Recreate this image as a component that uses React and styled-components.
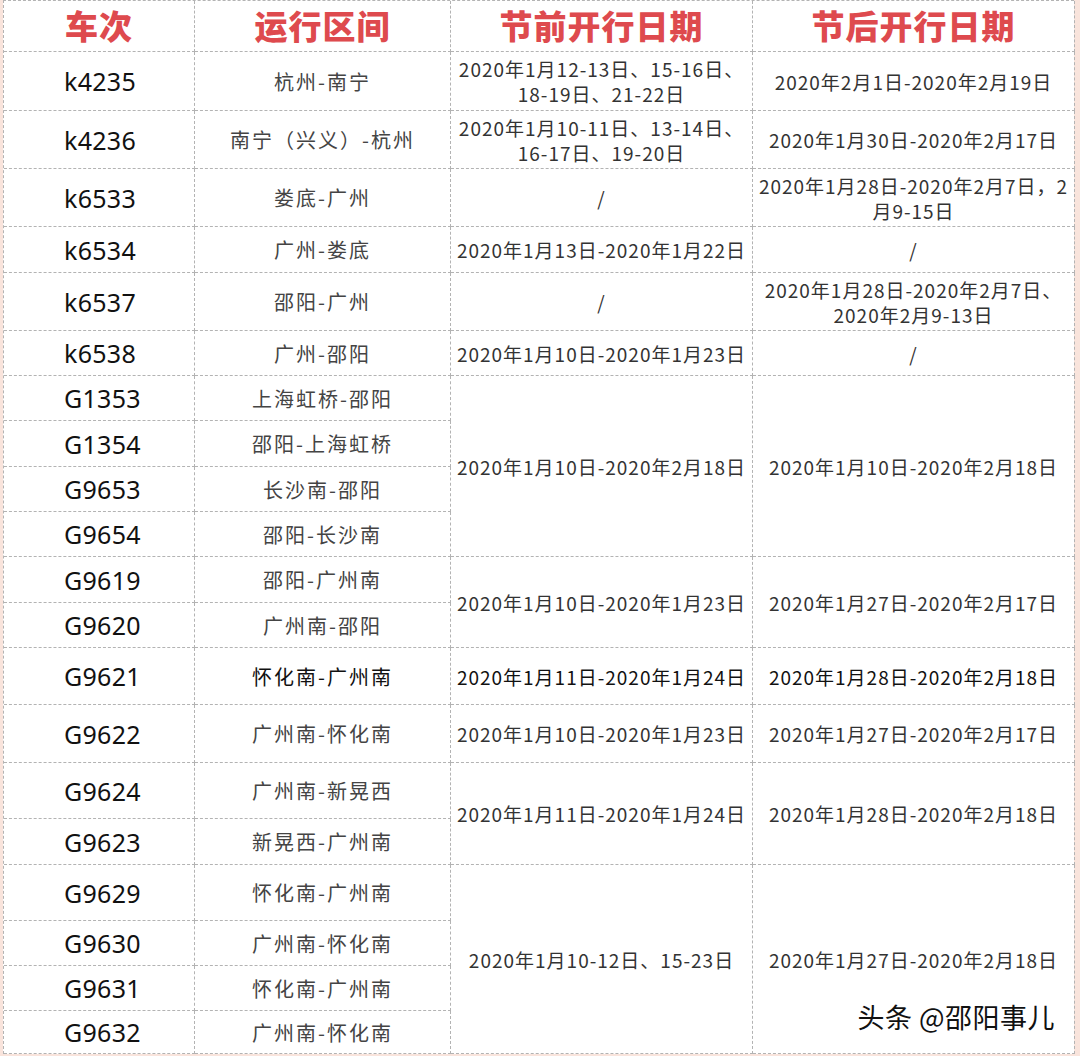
import React from "react";
import styled, { createGlobalStyle } from "styled-components";

const Global = createGlobalStyle`
  html, body { margin: 0; padding: 0; background: #f9e4dc; }
  body { font-family: "Noto Sans CJK SC", "Noto Sans", sans-serif; }
`;

const Page = styled.div`
  position: relative;
  width: 1080px;
  height: 1056px;
  background: #f9e4dc;
  padding: 0 6px 0 3px;
  box-sizing: border-box;
  overflow: hidden;
`;

const Table = styled.div`
  display: grid;
  grid-template-columns: 191px 256px 302px 322px;
  grid-template-rows: ${(p) => p.$rows.map((r) => r + "px").join(" ")};
  background: #fff;
  border-left: 1px dashed #b3b3b3;
  border-top: 1px dashed #b3b3b3;
`;

const Cell = styled.div`
  box-sizing: border-box;
  grid-row: span ${(p) => p.$span || 1};
  display: flex;
  align-items: center;
  justify-content: center;
  text-align: center;
  border-right: 1px dashed #b3b3b3;
  border-bottom: 1px dashed #b3b3b3;
  overflow: hidden;
`;

const Head = styled(Cell)`
  color: #de4a4e;
  font-size: 33px;
  font-weight: 900;
  letter-spacing: 1px;
  padding-bottom: 2px;
`;

const Train = styled(Cell)`
  justify-content: flex-start;
  padding-left: 60px;
  color: #111;
  font-family: "Noto Sans", "DejaVu Sans", sans-serif;
  font-size: 25px;
  letter-spacing: 0.3px;
`;

const Route = styled(Cell)`
  color: ${(p) => (p.$dark ? "#111" : "#444")};
  font-size: 20px;
  letter-spacing: 2px;
`;

const DateCell = styled(Cell)`
  color: ${(p) => (p.$dark ? "#111" : "#333")};
  font-size: 19px;
  line-height: 25px;
  letter-spacing: 1px;
  padding: 0 2px;
  white-space: pre-line;
`;

const Watermark = styled.div`
  position: absolute;
  right: 25px;
  bottom: 20px;
  font-size: 27px;
  color: #111;
  text-shadow: 1px 1px 0 #fff, -1px -1px 0 #fff;
  letter-spacing: 0.5px;
`;

const rows = [
  51, 59, 58, 58, 46, 58, 45, 45, 46, 45, 45, 46, 45, 57, 58, 56, 46, 56, 45,
  45, 43,
];

const data = [
  { t: "k4235", r: "杭州-南宁", a: "2020年1月12-13日、15-16日、\n18-19日、21-22日", b: "2020年2月1日-2020年2月19日" },
  { t: "k4236", r: "南宁（兴义）-杭州", a: "2020年1月10-11日、13-14日、\n16-17日、19-20日", b: "2020年1月30日-2020年2月17日" },
  { t: "k6533", r: "娄底-广州", a: "/", b: "2020年1月28日-2020年2月7日，2\n月9-15日" },
  { t: "k6534", r: "广州-娄底", a: "2020年1月13日-2020年1月22日", b: "/" },
  { t: "k6537", r: "邵阳-广州", a: "/", b: "2020年1月28日-2020年2月7日、\n2020年2月9-13日" },
  { t: "k6538", r: "广州-邵阳", a: "2020年1月10日-2020年1月23日", b: "/" },
  { t: "G1353", r: "上海虹桥-邵阳", a: "2020年1月10日-2020年2月18日", b: "2020年1月10日-2020年2月18日", span: 4 },
  { t: "G1354", r: "邵阳-上海虹桥" },
  { t: "G9653", r: "长沙南-邵阳" },
  { t: "G9654", r: "邵阳-长沙南" },
  { t: "G9619", r: "邵阳-广州南", a: "2020年1月10日-2020年1月23日", b: "2020年1月27日-2020年2月17日", span: 2 },
  { t: "G9620", r: "广州南-邵阳" },
  { t: "G9621", r: "怀化南-广州南", a: "2020年1月11日-2020年1月24日", b: "2020年1月28日-2020年2月18日", dark: true },
  { t: "G9622", r: "广州南-怀化南", a: "2020年1月10日-2020年1月23日", b: "2020年1月27日-2020年2月17日" },
  { t: "G9624", r: "广州南-新晃西", a: "2020年1月11日-2020年1月24日", b: "2020年1月28日-2020年2月18日", span: 2 },
  { t: "G9623", r: "新晃西-广州南" },
  { t: "G9629", r: "怀化南-广州南", a: "2020年1月10-12日、15-23日", b: "2020年1月27日-2020年2月18日", span: 4 },
  { t: "G9630", r: "广州南-怀化南" },
  { t: "G9631", r: "怀化南-广州南" },
  { t: "G9632", r: "广州南-怀化南" },
];

export default function App() {
  return (
    <Page>
      <Global />
      <Table $rows={rows}>
        <Head>车次</Head>
        <Head>运行区间</Head>
        <Head>节前开行日期</Head>
        <Head>节后开行日期</Head>
        {data.map((d) => (
          <React.Fragment key={d.t}>
            <Train>{d.t}</Train>
            <Route $dark={d.dark}>{d.r}</Route>
            {d.a !== undefined && (
              <DateCell $span={d.span} $dark={d.dark}>
                {d.a}
              </DateCell>
            )}
            {d.b !== undefined && (
              <DateCell $span={d.span} $dark={d.dark}>
                {d.b}
              </DateCell>
            )}
          </React.Fragment>
        ))}
      </Table>
      <Watermark>头条 @邵阳事儿</Watermark>
    </Page>
  );
}
